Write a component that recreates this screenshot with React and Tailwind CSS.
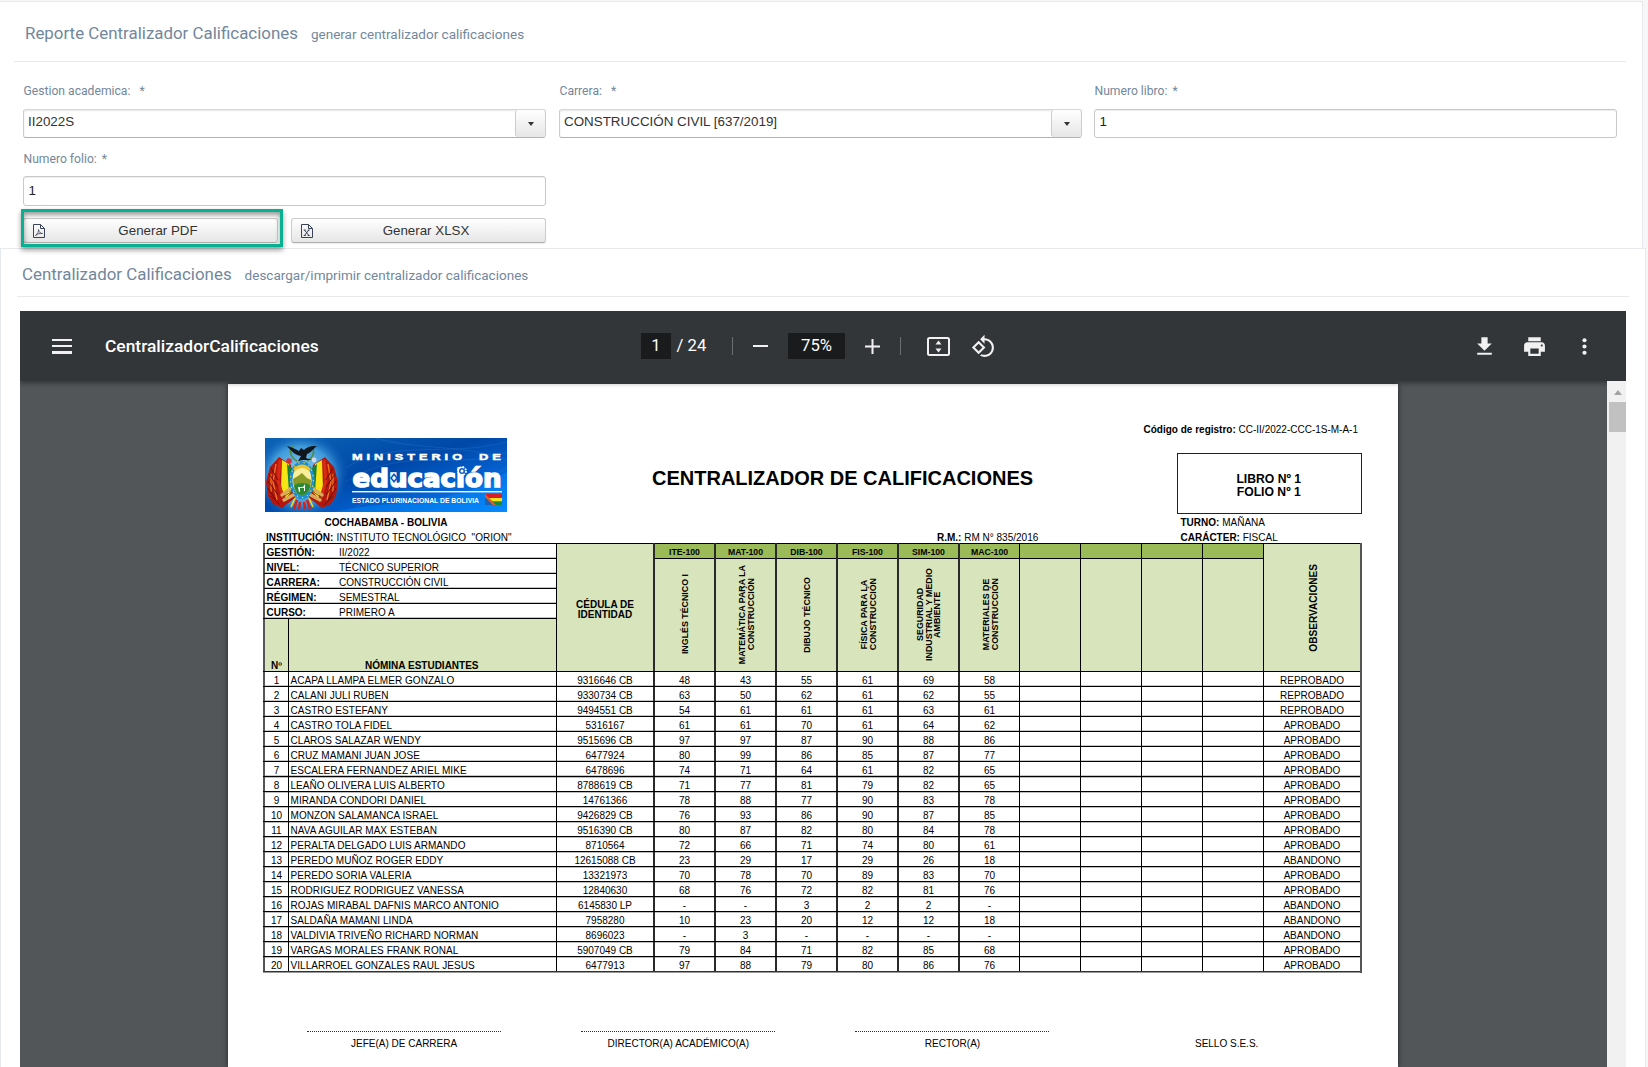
import React from 'react';

const students = [
  ['ACAPA LLAMPA ELMER GONZALO', '9316646 CB', '48 43 55 61 69 58', 'REPROBADO'],
  ['CALANI JULI RUBEN', '9330734 CB', '63 50 62 61 62 55', 'REPROBADO'],
  ['CASTRO ESTEFANY', '9494551 CB', '54 61 61 61 63 61', 'REPROBADO'],
  ['CASTRO TOLA FIDEL', '5316167', '61 61 70 61 64 62', 'APROBADO'],
  ['CLAROS SALAZAR WENDY', '9515696 CB', '97 97 87 90 88 86', 'APROBADO'],
  ['CRUZ MAMANI JUAN JOSE', '6477924', '80 99 86 85 87 77', 'APROBADO'],
  ['ESCALERA FERNANDEZ ARIEL MIKE', '6478696', '74 71 64 61 82 65', 'APROBADO'],
  ['LEAÑO OLIVERA LUIS ALBERTO', '8788619 CB', '71 77 81 79 82 65', 'APROBADO'],
  ['MIRANDA CONDORI DANIEL', '14761366', '78 88 77 90 83 78', 'APROBADO'],
  ['MONZON SALAMANCA ISRAEL', '9426829 CB', '76 93 86 90 87 85', 'APROBADO'],
  ['NAVA AGUILAR MAX ESTEBAN', '9516390 CB', '80 87 82 80 84 78', 'APROBADO'],
  ['PERALTA DELGADO LUIS ARMANDO', '8710564', '72 66 71 74 80 61', 'APROBADO'],
  ['PEREDO MUÑOZ ROGER EDDY', '12615088 CB', '23 29 17 29 26 18', 'ABANDONO'],
  ['PEREDO SORIA VALERIA', '13321973', '70 78 70 89 83 70', 'APROBADO'],
  ['RODRIGUEZ RODRIGUEZ VANESSA', '12840630', '68 76 72 82 81 76', 'APROBADO'],
  ['ROJAS MIRABAL DAFNIS MARCO ANTONIO', '6145830 LP', '- - 3 2 2 -', 'ABANDONO'],
  ['SALDAÑA MAMANI LINDA', '7958280', '10 23 20 12 12 18', 'ABANDONO'],
  ['VALDIVIA TRIVEÑO RICHARD NORMAN', '8696023', '- 3 - - - -', 'ABANDONO'],
  ['VARGAS MORALES FRANK RONAL', '5907049 CB', '79 84 71 82 85 68', 'APROBADO'],
  ['VILLARROEL GONZALES RAUL JESUS', '6477913', '97 88 79 80 86 76', 'APROBADO'],
];

const subjects = [
  ['ITE-100', ['INGLÉS TÉCNICO I']],
  ['MAT-100', ['MATEMÁTICA PARA LA', 'CONSTRUCCIÓN']],
  ['DIB-100', ['DIBUJO TÉCNICO']],
  ['FIS-100', ['FÍSICA PARA LA', 'CONSTRUCCIÓN']],
  ['SIM-100', ['SEGURIDAD', 'INDUSTRIAL Y MEDIO', 'AMBIENTE']],
  ['MAC-100', ['MATERIALES DE', 'CONSTRUCCIÓN']],
  ['', []], ['', []], ['', []], ['', []],
];

const info = [
  ['GESTIÓN:', 'II/2022'],
  ['NIVEL:', 'TÉCNICO SUPERIOR'],
  ['CARRERA:', 'CONSTRUCCIÓN CIVIL'],
  ['RÉGIMEN:', 'SEMESTRAL'],
  ['CURSO:', 'PRIMERO A'],
];

// Left edge of a column: a heavy rule for graded subjects, a thin one otherwise.
const heavy = 'border-l-2 border-l-[#2a2a2a]';
const thin = 'border-l border-l-black';
const colEdge = (i) => (i < 6 ? heavy : thin);

function Label({ children, gap }) {
  return (
    <div className="h-[14px] pl-[0.500px] text-[12.150px] leading-[14px] text-[#73879c]">
      {children}<span className={gap ? 'ml-[9px]' : 'ml-[5px]'}>*</span>
    </div>
  );
}

function Select({ value }) {
  return (
    <div className="mt-[11px] flex h-[29px] w-[523px] rounded-[3px] border border-[#ccc] border-t-[#d6d6d6] border-b-[#b3b3b3] bg-white shadow-[inset_0_1px_2px_rgba(0,0,0,0.1)]">
      <div className="flex-1 pl-1 pt-[4px] font-['Liberation_Sans',sans-serif] text-[13.400px] leading-[16px] text-[#333]">{value}</div>
      <div className="flex w-[30px] items-center justify-center rounded-[3px] border-l border-[#ccc] bg-linear-to-b from-white to-[#e6e6e6]">
        <span className="mt-[1px] h-0 w-0 border-x-[3.5px] border-t-4 border-x-transparent border-t-[#333]" />
      </div>
    </div>
  );
}

function TextInput({ value, className }) {
  return (
    <div className={"w-[523px] rounded-[3px] border border-[#c8c8c8] bg-white pl-[4.500px] font-['Liberation_Sans',sans-serif] text-[13.333px] leading-[16px] text-[#222] shadow-[inset_0_1px_1px_rgba(0,0,0,0.075)] " + className}>
      {value}
    </div>
  );
}

// A page with a folded corner, outlined in the manner of a classic file icon.
function FileIcon({ children }) {
  return (
    <svg width="12" height="14" viewBox="0 0 12 14" fill="none" stroke="#3a4257" strokeWidth="1">
      <path d="M0.500 0.500H7.500L11.500 4.500V13.500H0.500ZM7.500 0.500V4.500H11.500" />
      {children}
    </svg>
  );
}

function ActionButton({ icon, children }) {
  return (
    <div className="flex h-[25px] w-[255px] items-center rounded-[3px] border border-[#ccc] border-b-[#b0b0b0] bg-linear-to-b from-white to-[#e6e6e6] pl-[9px] text-[#333] shadow-[0_1px_1px_rgba(0,0,0,0.08)]">
      {icon}
      <span className="flex-1 pr-[6px] text-center font-['Liberation_Sans',sans-serif] text-[13.333px] leading-[16px]">{children}</span>
    </div>
  );
}

function Logo() {
  return (
    <svg width="242" height="74" viewBox="0 0 242 74" className="mt-px ml-[37px] block shrink-0">
      <defs>
        <linearGradient id="sky" x1="0" y1="0" x2="1" y2="1">
          <stop offset="0" stopColor="#0a63b4" />
          <stop offset="0.45" stopColor="#0048a8" />
          <stop offset="0.75" stopColor="#0566d8" />
          <stop offset="1" stopColor="#0a86ff" />
        </linearGradient>
        <radialGradient id="halo" cx="0.5" cy="0.5" r="0.5">
          <stop offset="0" stopColor="#9fd8f5" />
          <stop offset="0.65" stopColor="#4aa6e0" stopOpacity="0.85" />
          <stop offset="1" stopColor="#0a5cb8" stopOpacity="0" />
        </radialGradient>
      </defs>
      <rect width="242" height="74" fill="url(#sky)" />
      <path d="M70 74C130 60 190 70 242 34V74Z" fill="#0090ff" opacity="0.4" />
      <path d="M80 30C130 0 180 20 242 4M80 44C140 6 190 34 242 14M90 70C140 40 190 60 242 30M110 0C150 12 200 6 242 22" stroke="#4ba6f5" strokeWidth="0.7" fill="none" opacity="0.25" />
      <ellipse cx="36" cy="37" rx="48" ry="44" fill="url(#halo)" />
      {/* flags on both sides of the shield */}
      {[1, -1].map((s) => (
        <g key={s} transform={s === 1 ? undefined : 'translate(74 0) scale(-1 1)'}>
          <path d="M14 19L26 27 30 60 22 66 17 70 8 66 3 58 1 44 5 29Z" fill="#b3170f" />
          <path d="M17 22L24 26 28 52 21 60 16 50Z" fill="#f7e414" />
          <path d="M22 26L27 30 29 52 24 54Z" fill="#18803a" />
          <path d="M11 26L8 44 12 62M6 36L6 54" stroke="#f0751b" strokeWidth="1.4" fill="none" />
          <path d="M15 22L13 42 18 60" stroke="#d92a14" strokeWidth="3" fill="none" />
          <path d="M3 50L11 62M3 43L13 57M4 36L13 49M6 58L15 67M6 30L13 42" stroke="#6d0d08" strokeWidth="1" />
          <path d="M17 57L29 48M19 62L30 56" stroke="#d9a95c" strokeWidth="3.4" strokeLinecap="round" />
          <path d="M18 59L29 52" stroke="#6b3d12" strokeWidth="0.8" />
          <path d="M32 62L29 71M35 64L34 71" stroke="#d3201a" strokeWidth="2.4" />
          <path d="M30 60L26 69" stroke="#f3d822" strokeWidth="1.6" />
        </g>
      ))}
      <path d="M28 8C23 12 26 20 32 23M46 8C51 12 48 20 42 23" stroke="#4f8a35" strokeWidth="1.6" fill="none" />
      <circle cx="24" cy="23" r="2.8" fill="#d12e3c" />
      <circle cx="49" cy="22" r="2.4" fill="#d8d6e6" />
      <ellipse cx="37" cy="42" rx="12.5" ry="19" fill="#1e8fd0" />
      <ellipse cx="37" cy="42" rx="11.4" ry="17.6" fill="none" stroke="#f4d43a" strokeWidth="1.1" strokeDasharray="1.4 4" />
      <ellipse cx="37" cy="42" rx="9.6" ry="15" fill="#f8ef9c" />
      <path d="M28 41L33 38 37 35 42 40 46 42C46 50 42 57 37 57 32 57 28 50 28 41Z" fill="#8a9a26" />
      <path d="M29 47Q37 43 45.500 47C44 54 41 57 37 57 33 57 30 54 29 47Z" fill="#2c8a34" />
      <path d="M33 49h5l2-3v7h-1v-3h-4v4h-1z" fill="#fff" />
      <path d="M28 31Q37 22 46 31L44 33Q37 27 30 33Z" fill="#f0c52a" />
      <path d="M22 8C27 9 30 11 34 13L36 10 39 12C43 8 47 8 52 8 49 10 47 14 42 16L41 20 47 22 38 22 33 23 36 18C30 17 26 13 22 8Z" fill="#11161d" />
      <g fill="#fff" fontFamily="'Liberation Sans', sans-serif" fontWeight="700">
        <text x="87" y="21.500" fontSize="9.500" letterSpacing="3" textLength="114" lengthAdjust="spacingAndGlyphs" stroke="#fff" strokeWidth="0.5">MINISTERIO</text>
        <text x="214" y="21.500" fontSize="9.500" letterSpacing="3" textLength="26" lengthAdjust="spacingAndGlyphs" stroke="#fff" strokeWidth="0.5">DE</text>
        <text x="87.500" y="49" fontSize="25" fontFamily="'DejaVu Sans', sans-serif" textLength="149" lengthAdjust="spacingAndGlyphs" stroke="#fff" strokeWidth="1.500">educación</text>
        <rect x="87" y="53" width="150" height="1.400" />
        <text x="87" y="65" fontSize="7.200" textLength="127" lengthAdjust="spacingAndGlyphs">ESTADO PLURINACIONAL DE BOLIVIA</text>
      </g>
      <circle cx="197" cy="33" r="3.600" fill="none" stroke="#fff" strokeWidth="2.600" strokeDasharray="1.8 1" />
      <circle cx="197" cy="33" r="3" fill="#1160c4" />
      <circle cx="197" cy="33" r="1.500" fill="#fff" />
      <path d="M129 35l4 5-4 5-4-5z" fill="#0a58bd" />
      <path d="M129 37.500l2 2.500-2 2.500-2-2.500z" fill="#fff" />
      <path d="M220 56h17v4h-17z" fill="#d81f26" />
      <path d="M220 60h17v3.500h-17z" fill="#f9e31c" />
      <path d="M220 63.500h17v3.500h-17z" fill="#17873c" />
      <path d="M220 56l11 11h-11z" fill="#1c62b0" />
      <path d="M220 56l11 11h-3l-8-8z" fill="#e2632a" />
    </svg>
  );
}

function Toolbar() {
  return (
    <div className="relative z-10 flex h-[70px] items-center bg-[#323639] text-white shadow-[0_2px_5px_rgba(0,0,0,0.4)]">
      <div className="ml-[32px] flex h-[15px] w-5 flex-col justify-between">
        <span className="h-[2.500px] bg-[#f1f1f1]" />
        <span className="h-[2.500px] bg-[#f1f1f1]" />
        <span className="h-[2.500px] bg-[#f1f1f1]" />
      </div>
      <div className="ml-[33px] w-[536px] text-[17.400px] leading-5 font-medium">CentralizadorCalificaciones</div>
      <div className="flex h-[26px] w-[30px] items-center justify-center bg-[#191b1c] text-[16.500px]">1</div>
      <div className="ml-[5.500px] w-[55.500px] text-[16.700px]">/ 24</div>
      <div className="h-[18px] w-px bg-[#6b6e70]" />
      <div className="ml-5 h-[2px] w-[15px] bg-[#f1f1f1]" />
      <div className="ml-5 flex h-[26px] w-[57px] items-center justify-center bg-[#191b1c] text-[16.700px]">75%</div>
      <svg width="15" height="15" viewBox="0 0 15 15" className="ml-5"><path d="M6.500 0h2v6.500H15v2H8.500V15h-2V8.500H0v-2h6.500z" fill="#f1f1f1" /></svg>
      <div className="ml-5 h-[18px] w-px bg-[#6b6e70]" />
      <svg width="23" height="19" viewBox="0 0 23 19" className="ml-[26px]">
        <rect x="1" y="1" width="21" height="17" rx="1.500" fill="none" stroke="#f1f1f1" strokeWidth="2" />
        <path d="M11.500 3.500L14.500 7.500h-6zM11.500 15.500L8.500 11.500h6z" fill="#f1f1f1" />
      </svg>
      <svg width="25" height="25" viewBox="0 0 24 24" className="ml-[21px]" fill="#f1f1f1">
        <path d="M7.340 6.410L.86 12.900l6.490 6.480 6.490-6.480-6.500-6.490zM3.690 12.900l3.660-3.660L11 12.900l-3.660 3.660-3.650-3.660zm15.670-6.260C17.610 4.880 15.300 4 13 4V.76L8.760 5 13 9.240V6c1.790 0 3.580.68 4.950 2.050 2.730 2.730 2.730 7.170 0 9.900C16.580 19.320 14.790 20 13 20c-.97 0-1.940-.21-2.840-.61l-1.490 1.490C10.020 21.620 11.510 22 13 22c2.300 0 4.610-.88 6.360-2.640 3.520-3.510 3.520-9.210 0-12.720z" />
      </svg>
      <div className="ml-auto mr-[29px] flex gap-[25px]">
        <svg width="25" height="25" viewBox="0 0 24 24" fill="#f1f1f1"><path d="M5 20h14v-2H5v2zM19 9h-4V3H9v6H5l7 7 7-7z" /></svg>
        <svg width="25" height="25" viewBox="0 0 24 24" fill="#f1f1f1"><path d="M19 8H5c-1.660 0-3 1.340-3 3v6h4v4h12v-4h4v-6c0-1.660-1.340-3-3-3zm-3 11H8v-5h8v5zm3-7c-.55 0-1-.45-1-1s.45-1 1-1 1 .45 1 1-.45 1-1 1zm-1-9H6v4h12V3z" /></svg>
        <svg width="25" height="25" viewBox="0 0 24 24" fill="#f1f1f1"><circle cx="12" cy="6" r="2" /><circle cx="12" cy="12" r="2" /><circle cx="12" cy="18" r="2" /></svg>
      </div>
    </div>
  );
}

function GradesTable() {
  return (
    <div className="ml-[35px] w-[1099px] border-r-2 border-r-[#555]">
      <div className="flex h-[128px] bg-[#d7e4bc] font-bold">
        <div className="flex w-[293px] flex-col">
          {info.map(([k, v]) => (
            <div key={k} className="flex h-[15px] border-t border-l-2 border-t-black border-l-[#555] bg-white pt-px shadow-[inset_0_-1px_0_#c4c4c4]">
              <span className="w-[74px] pl-[1.500px]">{k}</span>
              <span className="font-normal">{v}</span>
            </div>
          ))}
          <div className="flex h-[53px] border-t border-black text-center">
            <div className="flex w-[25px] items-end justify-center border-l-2 border-l-[#555] leading-[11px]">Nº</div>
            <div className="flex flex-1 items-end border-l border-black pl-[76px] leading-[11px]">NÓMINA ESTUDIANTES</div>
          </div>
        </div>
        <div className="flex w-[97px] items-center justify-center border-t border-l border-black pt-[4px] text-center leading-[10px]">CÉDULA DE<br />IDENTIDAD</div>
        {subjects.map(([code, lines], i) => (
          <div key={i} className={'flex w-[61px] flex-col ' + colEdge(i)}>
            <div className="h-[15px] border-t border-black bg-[#9bbb59] pt-px text-center text-[8.700px] leading-[14px]">{code}</div>
            <div className="flex flex-1 items-center justify-center border-t border-black pl-[2px] pb-px">
              <div className="rotate-180 text-center text-[8.850px] leading-[8.700px] whitespace-nowrap [writing-mode:vertical-rl]">
                {lines.map((l) => <div key={l}>{l}</div>)}
              </div>
            </div>
          </div>
        ))}
        <div className="flex w-[97px] items-center justify-center border-t border-l border-black pl-[2px]">
          <div className="rotate-180 text-[10.100px] [writing-mode:vertical-rl]">OBSERVACIONES</div>
        </div>
      </div>
      {students.map(([name, id, grades, status], r) => {
        const g = grades.split(' ');
        return (
          <div key={name} className={'flex h-[15px] border-t border-black text-center ' + (r < 7 ? 'shadow-[inset_0_-1px_0_#c8c8c8]' : 'shadow-[inset_0_1px_0_#bdbdbd]')}>
            <div className="w-[25px] border-l-2 border-l-[#555] pt-px">{r + 1}</div>
            <div className="w-[268px] border-l border-black pt-px pl-[1.500px] text-left tracking-[0.050px]">{name}</div>
            <div className="w-[97px] border-l border-black pt-px">{id}</div>
            {subjects.map((_, i) => (
              <div key={i} className={'w-[61px] pt-px ' + colEdge(i)}>{g[i]}</div>
            ))}
            <div className="w-[97px] border-l border-black pt-px">{status}</div>
          </div>
        );
      })}
      <div className="h-[2px] border-b border-t border-t-[#333] border-b-[#999]" />
    </div>
  );
}

function Document() {
  return (
    <div className="mt-[3px] h-[683px] w-[1170px] shrink-0 bg-white font-['Liberation_Sans',sans-serif] text-[10px] leading-[15px] whitespace-pre text-black shadow-[0_0_5px_rgba(0,0,0,0.6)]">
      <div className="pt-[38px] pr-[40px] text-right"><b>Código de registro:</b> CC-II/2022-CCC-1S-M-A-1</div>
      <div className="flex h-[78px]">
        <Logo />
        <div className="mt-[29px] ml-[145px] w-[525px] text-[20px] leading-6 font-bold">CENTRALIZADOR DE CALIFICACIONES</div>
        <div className="mt-[16px] h-[61px] w-[184.500px] border border-[#222] pt-[19px] pr-px text-center text-[12.200px] leading-[13px] font-bold">LIBRO Nº 1<br />FOLIO Nº 1</div>
      </div>
      <div className="flex h-[15px]">
        <b className="ml-[37px] w-[242px] text-center">COCHABAMBA - BOLIVIA</b>
        <div className="ml-[673.500px]"><b>TURNO:</b> MAÑANA</div>
      </div>
      <div className="flex h-[13px] pl-[38px]">
        <div className="w-[671px]"><b>INSTITUCIÓN:</b><span className="ml-[0.500px] tracking-[0.020px]"> INSTITUTO TECNOLÓGICO  "ORION"</span></div>
        <div className="w-[243.500px]"><b>R.M.:</b> RM N° 835/2016</div>
        <div><b>CARÁCTER:</b> FISCAL</div>
      </div>
      <GradesTable />
      <div className="mt-[58px] ml-[39px] flex text-center">
        {['JEFE(A) DE CARRERA', 'DIRECTOR(A) ACADÉMICO(A)', 'RECTOR(A)', 'SELLO S.E.S.'].map((s, i) => (
          <div key={s} className="flex w-[274.200px] flex-col items-center">
            <div className={i < 3 ? 'h-px w-[194px] border-t border-dotted border-[#333]' : 'h-px w-[194px]'} />
            <div className="mt-1">{s}</div>
          </div>
        ))}
      </div>
    </div>
  );
}

export default function App() {
  return (
    <div className="h-[1067px] w-[1648px] overflow-hidden bg-[#f7f7f7] pt-px font-['Roboto',sans-serif]">
      <section className="h-[247px] w-[1643px] border-t border-r border-[#e6e9ed] bg-white">
        <div className="ml-[14px] flex h-[60px] w-[1612px] items-baseline border-b border-[#e6e9ed] pt-[21px] pl-[11px] text-[#73879c]">
          <h2 className="text-[16.900px] leading-5">Reporte Centralizador Calificaciones</h2>
          <span className="ml-[13px] text-[13.520px] leading-5">generar centralizador calificaciones</span>
        </div>
        <div className="mt-[22px] ml-[23px] flex">
          <div className="w-[536px]"><Label gap>Gestion academica:</Label><Select value="II2022S" /></div>
          <div className="w-[535px]"><Label gap>Carrera:</Label><Select value="CONSTRUCCIÓN CIVIL [637/2019]" /></div>
          <div><Label>Numero libro:</Label><TextInput value="1" className="mt-[11px] h-[29px] pt-[4px]" /></div>
        </div>
        <div className="mt-[14px] ml-[23px]">
          <Label>Numero folio:</Label>
          <TextInput value="1" className="mt-[10px] h-[30px] pt-[6px]" />
        </div>
        <div className="relative mt-[12px] ml-[23px] flex gap-[13px]">
          <ActionButton icon={<FileIcon><path d="M2.500 11.500C5 9.500 5.800 7 5.500 5.500C6 8.500 7.500 9.500 9.500 9.500C7 9 4.500 9.800 2.500 11.500Z" strokeWidth="0.800" /></FileIcon>}>Generar PDF</ActionButton>
          <ActionButton icon={<FileIcon><path d="M3.500 6L7.800 11.500M7.800 6L3.500 11.500M2.700 6H4.700M6.700 6H8.700M2.700 11.500H4.700M6.700 11.500H8.700" /></FileIcon>}>Generar XLSX</ActionButton>
          <div className="absolute -top-[9px] -left-[2px] z-20 h-[38px] w-[262px] border-3 border-[#07b091] shadow-[0_3px_5px_rgba(0,0,0,0.4),inset_0_3px_5px_rgba(0,0,0,0.4)]" />
        </div>
      </section>
      <section className="h-[819px] w-[1646px] border border-b-0 border-[#e6e9ed] bg-white">
        <div className="ml-[16px] flex h-[48px] w-[1612px] items-baseline border-b border-[#e6e9ed] pt-[15px] pl-[5px] text-[#73879c]">
          <h2 className="text-[16.900px] leading-5">Centralizador Calificaciones</h2>
          <span className="ml-[13px] text-[13.520px] leading-5">descargar/imprimir centralizador calificaciones</span>
        </div>
        <div className="mt-[14px] ml-[19px] w-[1606px] overflow-hidden">
          <Toolbar />
          <div className="flex h-[686px] bg-[#525659]">
            <div className="flex flex-1 justify-start overflow-hidden pl-[208px]"><Document /></div>
            <div className="relative z-20 w-[19px] bg-[#f1f1f1] pl-[2px]">
              <div className="flex h-[21px] items-center justify-center">
                <span className="mt-[2px] h-0 w-0 border-x-[4.500px] border-b-[5px] border-x-transparent border-b-[#a3a3a3]" />
              </div>
              <div className="h-[30px] bg-[#c1c1c1]" />
            </div>
          </div>
        </div>
      </section>
    </div>
  );
}
